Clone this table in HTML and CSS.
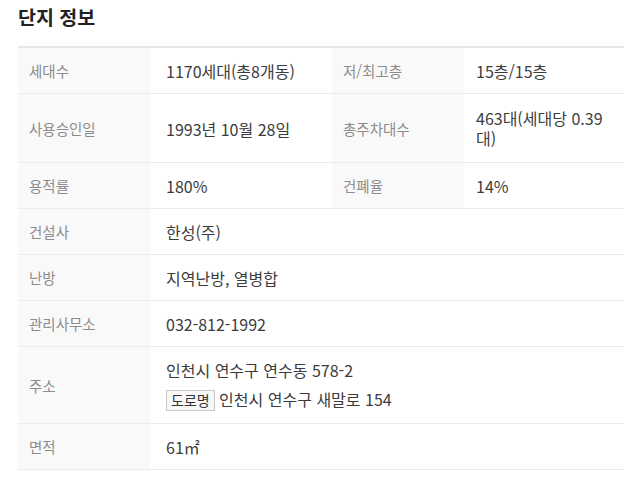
FILE: index.html
```html
<!DOCTYPE html>
<html lang="ko">
<head>
<meta charset="utf-8">
<link rel="stylesheet" href="styles.css">
</head>
<body>
<section class="info">
  <h2 class="title">단지 정보</h2>
  <table class="tbl">
    <colgroup>
      <col class="c-l1"><col class="c-v1"><col class="c-l2"><col class="c-v2">
    </colgroup>
    <tr>
      <th>세대수</th><td>1170세대(총8개동)</td>
      <th class="th2">저/최고층</th><td class="td2">15층/15층</td>
    </tr>
    <tr class="row-wrap">
      <th>사용승인일</th><td>1993년 10월 28일</td>
      <th class="th2">총주차대수</th><td class="td2 wrap2">463대(세대당 0.39대)</td>
    </tr>
    <tr>
      <th>용적률</th><td>180%</td>
      <th class="th2">건폐율</th><td class="td2">14%</td>
    </tr>
    <tr>
      <th>건설사</th><td colspan="3">한성(주)</td>
    </tr>
    <tr>
      <th>난방</th><td colspan="3">지역난방, 열병합</td>
    </tr>
    <tr>
      <th>관리사무소</th><td colspan="3">032-812-1992</td>
    </tr>
    <tr>
      <th>주소</th>
      <td colspan="3">
        <div>인천시 연수구 연수동 578-2</div>
        <div class="road"><span class="badge">도로명</span> 인천시 연수구 새말로 154</div>
      </td>
    </tr>
    <tr>
      <th>면적</th><td colspan="3">61㎡</td>
    </tr>
  </table>
</section>
</body>
</html>
```
FILE: styles.css
```css
html, body {
  margin: 0;
  padding: 0;
  background: #fff;
}
body {
  font-family: "Noto Sans CJK KR", "Noto Sans", sans-serif;
  color: #333;
}
.info {
  padding: 4px 16px 0 18px;
  width: 606px;
}
.title {
  margin: 0 0 16px;
  font-size: 19.5px;
  font-weight: 700;
  line-height: 26px;
  color: #222;
}
.tbl {
  width: 606px;
  border-collapse: collapse;
  table-layout: fixed;
  border-top: 2px solid #e6e6e6;
  line-height: 22px;
}
.c-l1 { width: 132px; }
.c-v1 { width: 182px; }
.c-l2 { width: 132px; }
.c-v2 { width: 160px; }
.tbl th, .tbl td {
  border-bottom: 1px solid #ececec;
  padding: 12px 12px 11px 16px;
  text-align: left;
  vertical-align: middle;
  font-weight: 400;
}
.tbl th {
  background: #f9f9f9;
  color: #8c8c8c;
  font-size: 14.5px;
  padding-left: 11px;
}
.tbl td {
  color: #3c3c3c;
  font-size: 16px;
}
.tbl .th2 { padding-left: 11px; }
.tbl .td2 { padding-left: 12px; padding-right: 12px; }
.tbl .wrap2 {
  line-height: 20px;
  padding-top: 14px;
  padding-bottom: 14px;
}
.road {
  margin-top: 6px;
  line-height: 25px;
}
.badge {
  display: inline-block;
  border: 1px solid #c8c8c8;
  background: #f7f7f7;
  padding: 0 4px;
  font-size: 14px;
  line-height: 19px;
  color: #333;
}
```
